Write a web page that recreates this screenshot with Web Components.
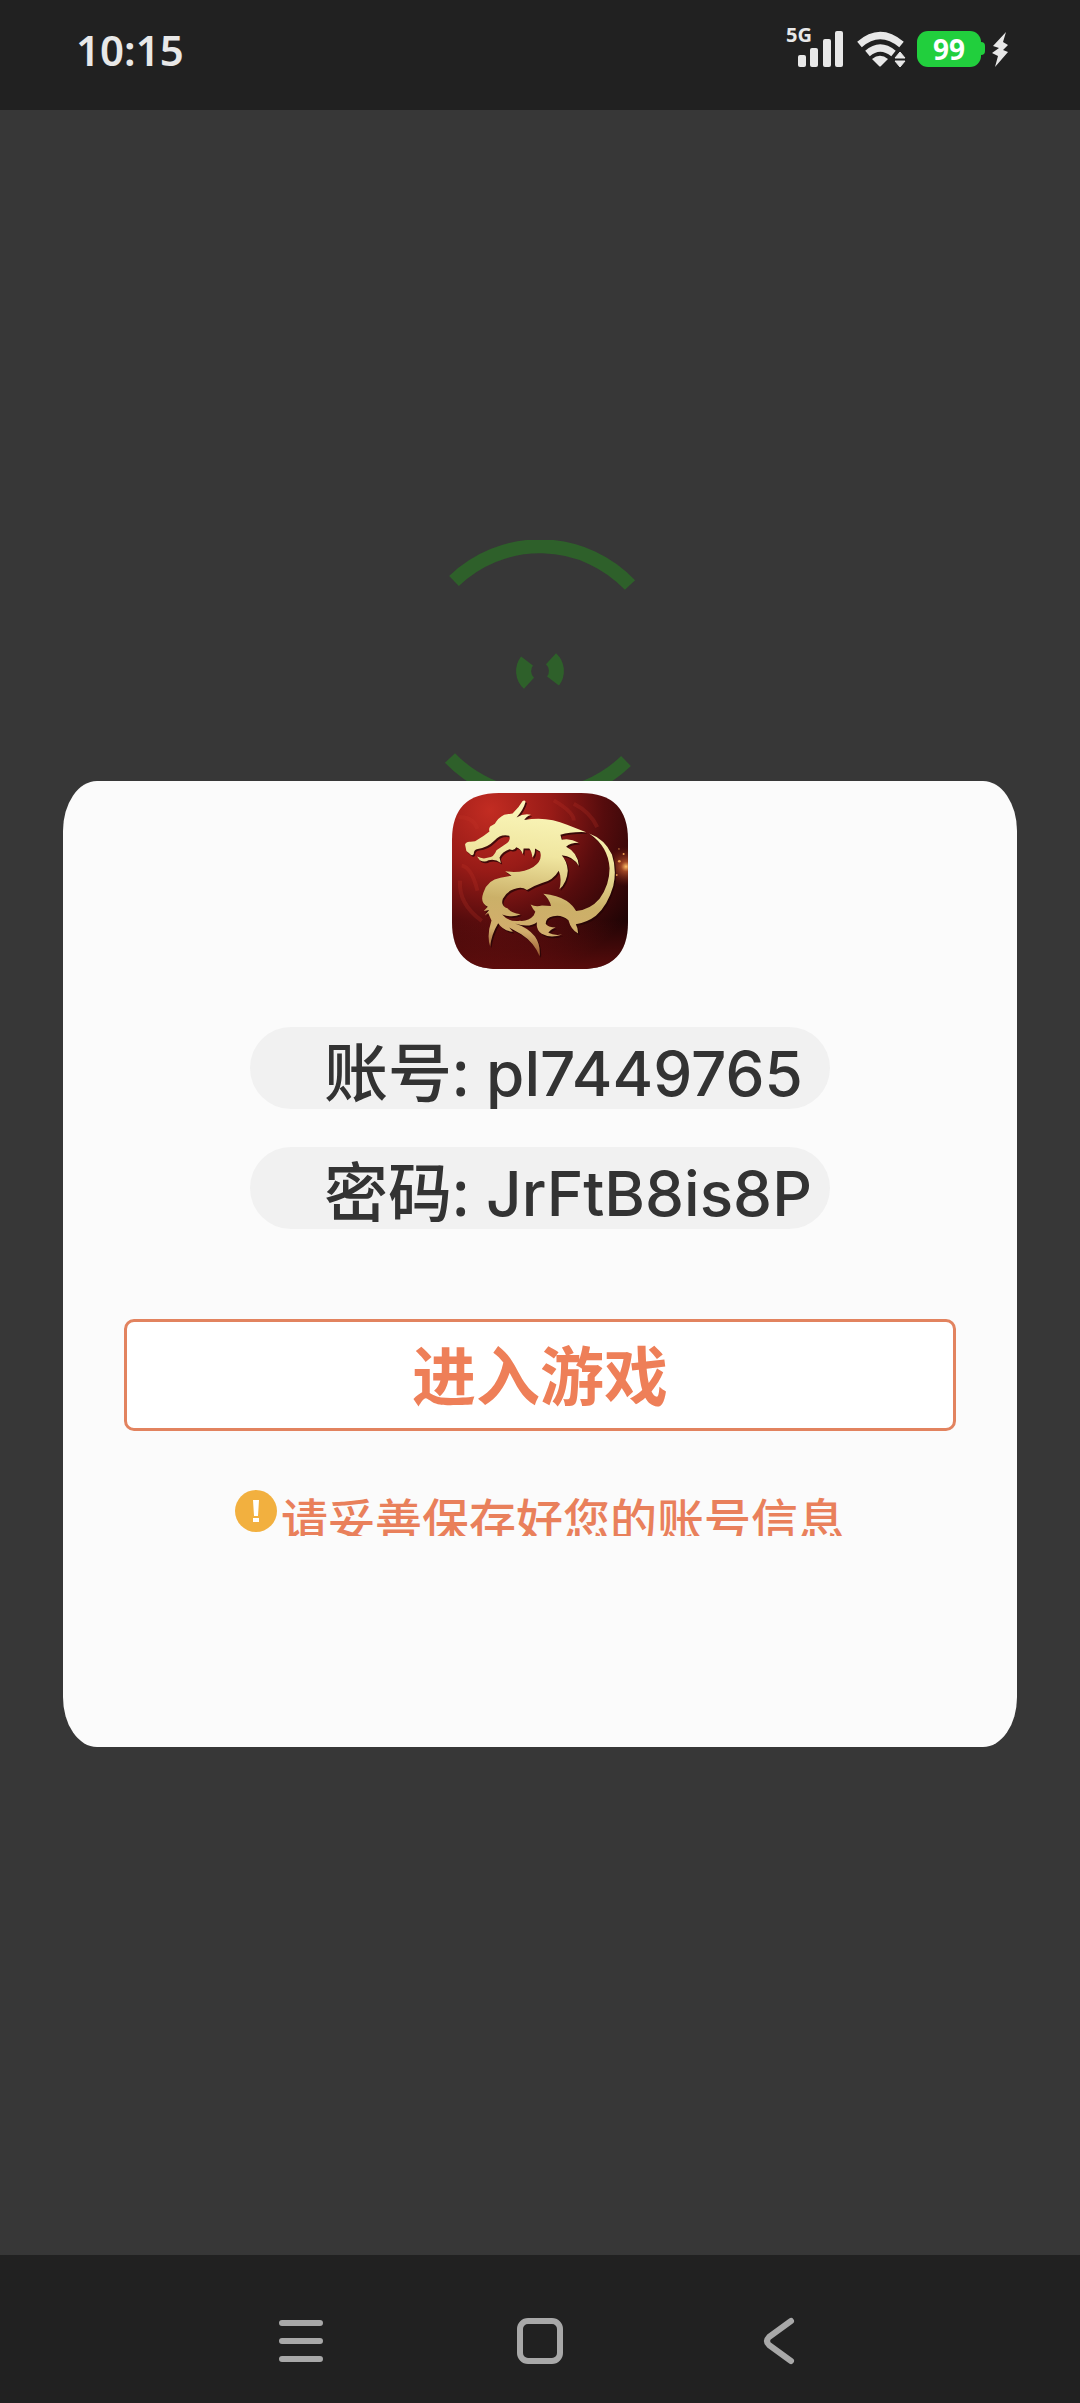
<!DOCTYPE html>
<html lang="zh-CN">
<head>
    <meta charset="UTF-8">
    <meta name="viewport" content="width=device-width, initial-scale=1.0">
    <title>账号信息</title>
    <style>
        body {
            margin: 0;
            background: #373737;
            font-family: "Noto Sans", "Noto Sans CJK SC", sans-serif;
        }
    </style>
</head>
<body>
    <game-screen>
        <status-bar slot="top" time="10:15" battery="99"></status-bar>
        <loading-rings slot="behind"></loading-rings>
        <account-dialog>
            <dragon-icon slot="icon"></dragon-icon>
            <info-pill label="账号">pl7449765</info-pill>
            <info-pill label="密码">JrFtB8is8P</info-pill>
            <enter-button slot="action">进入游戏</enter-button>
            <save-hint slot="hint">请妥善保存好您的账号信息</save-hint>
        </account-dialog>
        <nav-bar slot="bottom"></nav-bar>
    </game-screen>

    <script>
        class GameScreen extends HTMLElement {
            constructor() {
                super();
                this.attachShadow({ mode: 'open' }).innerHTML = `
                    <style>
                        :host {
                            display: flex;
                            flex-direction: column;
                            min-height: 100vh;
                        }
                        /* the rings and the dialog share one cell, the dialog on top */
                        main {
                            flex: 1;
                            display: grid;
                            grid-template-columns: 1fr;
                            align-items: start;
                        }
                        .behind, .front {
                            grid-area: 1 / 1;
                        }
                        .behind {
                            padding-top: 430px;
                            justify-self: center;
                        }
                        .front {
                            padding: 671px 63px 0;
                        }
                    </style>
                    <slot name="top"></slot>
                    <main>
                        <div class="behind"><slot name="behind"></slot></div>
                        <div class="front"><slot></slot></div>
                    </main>
                    <slot name="bottom"></slot>
                `;
            }
        }

        class StatusBar extends HTMLElement {
            connectedCallback() {
                this.attachShadow({ mode: 'open' }).innerHTML = `
                    <style>
                        :host {
                            display: flex;
                            justify-content: space-between;
                            align-items: flex-start;
                            height: 110px;
                            box-sizing: border-box;
                            padding: 25px 71px 0 76px;
                            background: #212121;
                            color: #e8e8e8;
                        }
                        .time {
                            font: 600 42px/50px "Noto Sans", sans-serif;
                        }
                        .icons {
                            display: flex;
                            align-items: flex-start;
                        }
                        svg {
                            display: block;
                            fill: currentColor;
                        }
                        .net {
                            font: 700 20px/20px "Noto Sans", sans-serif;
                            margin-right: -14px;
                        }
                        .signal { margin: 6px 13px 0 0; }
                        .wifi { margin: 6px 11px 0 0; }
                        .battery {
                            width: 64px;
                            height: 36px;
                            margin-top: 6px;
                            border-radius: 11px;
                            background: #21cf3d;
                            color: #fff;
                            text-align: center;
                            font: 700 28px/36px "Noto Sans", sans-serif;
                        }
                        .tip { fill: #21cf3d; margin-top: 17px; }
                        .bolt { margin: 7px 0 0 7px; }
                    </style>
                    <span class="time">${this.getAttribute('time')}</span>
                    <div class="icons">
                        <span class="net">5G</span>
                        <svg class="signal" width="46" height="36" viewBox="0 0 46 36">
                            <rect x="0" y="24" width="8" height="12" rx="2"/>
                            <rect x="12" y="17" width="8" height="19" rx="2"/>
                            <rect x="25" y="8" width="8" height="28" rx="2"/>
                            <rect x="37" y="0" width="8" height="36" rx="2"/>
                        </svg>
                        <svg class="wifi" width="49" height="37" viewBox="0 0 49 37">
                            <path d="M2.500 13.500 Q23 -4.500 44.500 13.500" fill="none" stroke="currentColor" stroke-width="7"/>
                            <path d="M10.500 22.500 Q23 11.500 36.500 22.500" fill="none" stroke="currentColor" stroke-width="7"/>
                            <path d="M15 28 Q23 21.500 31 28 L24 35 Q23 36 22 35Z"/>
                            <path d="M43 21 L48 27 H38Z M38 30 H48 L43 36Z" stroke="currentColor" stroke-width="1" stroke-linejoin="round"/>
                        </svg>
                        <span class="battery">${this.getAttribute('battery')}</span>
                        <svg class="tip" width="4" height="13" viewBox="0 0 4 13">
                            <path d="M0 0 Q4 0 4 4 V9 Q4 13 0 13Z"/>
                        </svg>
                        <svg class="bolt" width="17" height="36" viewBox="0 0 17 36">
                            <path d="M14 0 L1 14 L7 16 L0 21 L6 24 L3 35 L16 20 L11 18 L16 13 L11 10Z"/>
                        </svg>
                    </div>
                `;
            }
        }

        class LoadingRings extends HTMLElement {
            constructor() {
                super();
                this.attachShadow({ mode: 'open' }).innerHTML = `
                    <style>
                        :host { display: block; }
                        svg { display: block; }
                    </style>
                    <svg width="262" height="262" viewBox="-131 -131 262 262" fill="none" stroke="#2e602a" stroke-width="14">
                        <path d="M-86 -90 A124 124 0 0 1 90 -86"/>
                        <path d="M-90 87 A124 124 0 0 0 86 90"/>
                        <path d="M-13 -10 A16.5 16.5 0 0 0 -11 12.3" stroke-width="15"/>
                        <path d="M11 -12.3 A16.5 16.5 0 0 1 13 10" stroke-width="15"/>
                    </svg>
                `;
            }
        }

        class AccountDialog extends HTMLElement {
            constructor() {
                super();
                this.attachShadow({ mode: 'open' }).innerHTML = `
                    <style>
                        :host {
                            display: block;
                            padding: 12px 61px 211px;
                            border-radius: 34px / 50px;
                            background: #fbfbfb;
                            color: #333;
                        }
                        section {
                            display: flex;
                            flex-direction: column;
                            align-items: center;
                        }
                        .rows {
                            display: flex;
                            flex-direction: column;
                            gap: 38px;
                            margin: 58px 0 90px;
                        }
                        .action {
                            align-self: stretch;
                            margin-bottom: 57px;
                        }
                    </style>
                    <section role="dialog">
                        <slot name="icon"></slot>
                        <div class="rows"><slot></slot></div>
                        <div class="action"><slot name="action"></slot></div>
                        <slot name="hint"></slot>
                    </section>
                `;
            }
        }

        class DragonIcon extends HTMLElement {
            constructor() {
                super();
                this.attachShadow({ mode: 'open' }).innerHTML = `
                    <style>
                        :host { display: block; }
                        svg { display: block; }
                    </style>
                    <svg width="176" height="176" viewBox="36 38 526 526">
                        <defs>
                            <radialGradient id="red" gradientUnits="userSpaceOnUse" cx="150" cy="90" r="520">
                                <stop offset="0" stop-color="#c22c22"/>
                                <stop offset="0.35" stop-color="#981b17"/>
                                <stop offset="0.65" stop-color="#560c0d"/>
                                <stop offset="1" stop-color="#200405"/>
                            </radialGradient>
                            <linearGradient id="floor" x1="0" y1="0" x2="0" y2="1">
                                <stop offset="0.72" stop-color="#7d1110" stop-opacity="0"/>
                                <stop offset="1" stop-color="#7d1110" stop-opacity="0.6"/>
                            </linearGradient>
                            <radialGradient id="glow">
                                <stop offset="0" stop-color="#ffc06a"/>
                                <stop offset="0.25" stop-color="#b5532a" stop-opacity="0.8"/>
                                <stop offset="1" stop-color="#6d1a10" stop-opacity="0"/>
                            </radialGradient>
                            <linearGradient id="gold" gradientUnits="userSpaceOnUse" x1="280" y1="60" x2="230" y2="520">
                                <stop offset="0" stop-color="#fbf8bd"/>
                                <stop offset="0.35" stop-color="#f0e6a0"/>
                                <stop offset="0.65" stop-color="#cbb068"/>
                                <stop offset="0.85" stop-color="#d2ae6c"/>
                                <stop offset="1" stop-color="#99542c"/>
                            </linearGradient>
                            <clipPath id="tile"><path d="M36 178 Q36 38 176 38 H422 Q562 38 562 178 V424 Q562 564 422 564 H176 Q36 564 36 424Z"/></clipPath>
                        </defs>
                        <g clip-path="url(#tile)">
                            <rect x="36" y="38" width="526" height="526" fill="url(#red)"/>
                            <rect x="36" y="38" width="526" height="526" fill="url(#floor)"/>
                            <g fill="none" stroke="#c8352a" stroke-opacity="0.22" stroke-width="12">
                                <path d="M55 110 Q100 110 112 145 M60 300 Q55 370 125 420 M65 255 Q95 260 112 330"/>
                                <path d="M340 60 Q400 95 400 120 M400 70 Q450 95 470 140"/>
                            </g>
                            <circle cx="556" cy="258" r="60" fill="url(#glow)"/>
                            <g fill="#f0a050">
                                <circle cx="536" cy="242" r="4"/>
                                <circle cx="549" cy="220" r="3"/>
                                <circle cx="528" cy="283" r="3"/>
                                <circle cx="535" cy="205" r="2"/>
                            </g>
                            <path id="dragon" transform="translate(4 5)" fill="#230405" fill-opacity="0.75" d="M75 192 Q79 182 92 184 L105 182 Q130 168 148 153 Q145 145 150 138 L164 130 Q174 112 192 103 L217 99 Q236 82 247 62 Q253 58 256 64 Q250 87 229 111 Q250 98 272 103 Q257 108 252 119 Q318 106 380 133 Q410 145 437 155 Q392 153 360 163 L364 178 Q389 172 415 187 Q388 187 377 199 Q412 216 415 256 Q397 226 364 224 Q380 242 382 270 Q380 305 357 326 Q365 291 355 270 Q338 299 305 307 Q278 316 260 328 Q243 315 220 326 Q199 333 188 354 Q180 377 203 383 Q213 398 241 400 Q218 412 186 401 Q205 424 239 420 Q265 422 280 404 L285 393 Q277 384 271 371 Q286 380 305 374 L332 376 Q327 354 309 339 Q351 343 378 360 Q397 373 407 391 Q450 386 477 354 Q507 313 507 263 Q503 198 446 159 Q493 176 514 222 Q529 267 518 316 Q501 375 466 405 Q440 425 406 430 Q413 441 413 458 Q392 447 384 418 Q364 400 338 406 Q316 410 316 429 Q322 440 346 440 Q330 446 324 456 Q341 465 365 461 Q331 474 304 459 Q286 445 290 424 Q266 442 224 428 Q263 440 284 467 Q301 491 298 526 Q281 484 243 460 L207 440 L218 453 Q188 449 174 427 Q154 460 150 497 Q139 463 154 419 L144 397 L134 404 L147 388 L131 391 L143 378 Q118 367 130 335 Q142 297 181 291 L214 285 L195 272 Q247 279 279 259 Q308 240 299 213 L284 204 Q285 222 276 231 Q275 213 267 204 L250 204 L248 221 Q242 205 228 200 Q222 212 208 206 Q186 213 178 231 L182 247 Q165 234 145 239 Q134 247 119 239 L111 228 Q128 237 145 231 Q161 230 169 209 L191 194 Q214 181 207 166 Q181 160 163 180 Q140 203 113 205 Q101 207 101 220 Q96 228 88 219 L79 211Z"/>
                            <use href="#dragon" class="face"/>
                        </g>
                    </svg>
                `;
                // the same outline once more, in gold, over its shadow
                const face = this.shadowRoot.querySelector('#dragon').cloneNode();
                face.removeAttribute('id');
                face.removeAttribute('transform');
                face.removeAttribute('fill-opacity');
                face.setAttribute('fill', 'url(#gold)');
                this.shadowRoot.querySelector('.face').replaceWith(face);
            }
        }

        class InfoPill extends HTMLElement {
            connectedCallback() {
                this.attachShadow({ mode: 'open' }).innerHTML = `
                    <style>
                        :host {
                            display: block;
                            width: 580px;
                            height: 82px;
                            box-sizing: border-box;
                            padding-left: 74px;
                            border-radius: 41px;
                            background: #f1f1f1;
                            white-space: nowrap;
                            font-size: 64px;
                            font-weight: 500;
                            line-height: 90px;
                        }
                        .value {
                            font-family: Inter, sans-serif;
                            font-size: 62px;
                        }
                    </style>
                    ${this.getAttribute('label')}: <span class="value"><slot></slot></span>
                `;
            }
        }

        class EnterButton extends HTMLElement {
            constructor() {
                super();
                this.attachShadow({ mode: 'open' }).innerHTML = `
                    <style>
                        :host { display: block; }
                        button {
                            display: block;
                            width: 100%;
                            height: 112px;
                            padding: 2px 0 0;
                            border: 3px solid #e2835f;
                            border-radius: 10px;
                            background: #fff;
                            color: #ee7f58;
                            font-family: inherit;
                            font-size: 64px;
                            font-weight: 700;
                            line-height: 104px;
                        }
                    </style>
                    <button type="button"><slot></slot></button>
                `;
            }
        }

        class SaveHint extends HTMLElement {
            constructor() {
                super();
                this.attachShadow({ mode: 'open' }).innerHTML = `
                    <style>
                        :host {
                            display: flex;
                            gap: 4px;
                            height: 48px;
                            overflow: hidden;
                            color: #e9805b;
                            font-size: 47px;
                            font-weight: 500;
                            line-height: 64px;
                            white-space: nowrap;
                        }
                        svg {
                            flex: none;
                            margin-top: 2px;
                        }
                    </style>
                    <svg width="42" height="42" viewBox="0 0 42 42">
                        <circle cx="21" cy="21" r="21" fill="#f2b03f"/>
                        <path d="M18 10 H24 L23 26 H19Z M18 28 H24 V32 H18Z" fill="#fff"/>
                    </svg>
                    <span><slot></slot></span>
                `;
            }
        }

        class NavBar extends HTMLElement {
            constructor() {
                super();
                this.attachShadow({ mode: 'open' }).innerHTML = `
                    <style>
                        :host {
                            display: block;
                            background: #212121;
                        }
                        nav {
                            display: flex;
                            justify-content: center;
                            gap: 139px;
                            padding: 36px 0 12px;
                        }
                        button {
                            width: 100px;
                            height: 100px;
                            padding: 0;
                            border: 0;
                            background: none;
                            color: #a8a8a8;
                        }
                        svg {
                            display: block;
                            margin: auto;
                            fill: none;
                            stroke: currentColor;
                            stroke-width: 6;
                            stroke-linecap: round;
                            stroke-linejoin: round;
                        }
                    </style>
                    <nav>
                        <button type="button" aria-label="菜单">
                            <svg width="48" height="48" viewBox="0 0 48 48"><path d="M5 6 H43 M5 24 H43 M5 42 H43"/></svg>
                        </button>
                        <button type="button" aria-label="主页">
                            <svg width="48" height="48" viewBox="0 0 48 48"><rect x="4" y="4" width="40" height="40" rx="8"/></svg>
                        </button>
                        <button type="button" aria-label="返回">
                            <svg width="48" height="48" viewBox="0 0 48 48"><path d="M36 4 L14 20 Q10 24 14 28 L36 44"/></svg>
                        </button>
                    </nav>
                `;
            }
        }

        customElements.define('game-screen', GameScreen);
        customElements.define('status-bar', StatusBar);
        customElements.define('loading-rings', LoadingRings);
        customElements.define('account-dialog', AccountDialog);
        customElements.define('dragon-icon', DragonIcon);
        customElements.define('info-pill', InfoPill);
        customElements.define('enter-button', EnterButton);
        customElements.define('save-hint', SaveHint);
        customElements.define('nav-bar', NavBar);
    </script>
</body>
</html>
